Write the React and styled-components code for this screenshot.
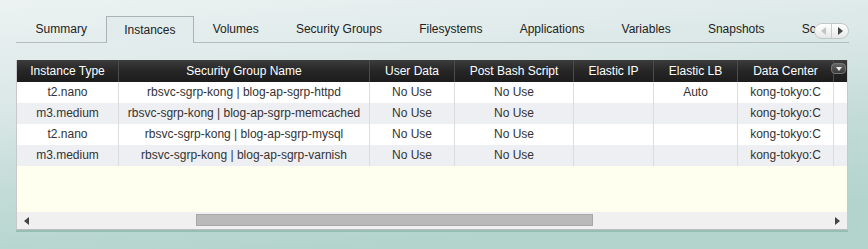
import React from "react";
import styled, { createGlobalStyle } from "styled-components";

const GlobalStyle = createGlobalStyle`
  html, body {
    margin: 0;
    padding: 0;
  }
  body {
    width: 868px;
    height: 249px;
    overflow: hidden;
    font-family: "Liberation Sans", Arial, sans-serif;
    font-size: 12px;
    background: linear-gradient(175deg, #ecf2f2 0%, #d9e7e6 35%, #c2dbd6 60%, #b3d4cd 85%);
  }
`;

const tabs = [
  "Summary",
  "Instances",
  "Volumes",
  "Security Groups",
  "Filesystems",
  "Applications",
  "Variables",
  "Snapshots",
  "Schedules",
];

const columns = [
  { title: "Instance Type", width: 102 },
  { title: "Security Group Name", width: 251 },
  { title: "User Data", width: 85 },
  { title: "Post Bash Script", width: 119 },
  { title: "Elastic IP", width: 80 },
  { title: "Elastic LB", width: 84 },
  { title: "Data Center", width: 96 },
  { title: "", width: 15 },
];

const rows = [
  ["t2.nano", "rbsvc-sgrp-kong | blog-ap-sgrp-httpd", "No Use", "No Use", "", "Auto", "kong-tokyo:C", ""],
  ["m3.medium", "rbsvc-sgrp-kong | blog-ap-sgrp-memcached", "No Use", "No Use", "", "", "kong-tokyo:C", ""],
  ["t2.nano", "rbsvc-sgrp-kong | blog-ap-sgrp-mysql", "No Use", "No Use", "", "", "kong-tokyo:C", ""],
  ["m3.medium", "rbsvc-sgrp-kong | blog-ap-sgrp-varnish", "No Use", "No Use", "", "", "kong-tokyo:C", ""],
];

const gridCols = columns.map((c) => c.width + "px").join(" ");

const App = () => {
  return (
    <>
      <GlobalStyle />
      <Page>
        <TabBar>
          <TabStrip>
            {tabs.map((t) => (
              <Tab key={t} $active={t === "Instances"}>
                {t}
              </Tab>
            ))}
          </TabStrip>
          <TabScroller>
            <ScrollHalf>
              <Arrow $dir="left" $color="#c4c4c4" />
            </ScrollHalf>
            <ScrollHalf $right>
              <Arrow $dir="right" $color="#444" />
            </ScrollHalf>
          </TabScroller>
        </TabBar>

        <Grid>
          <HeaderRow>
            {columns.map((c, i) => (
              <HeadCell key={i} $last={i === columns.length - 1}>
                {c.title}
              </HeadCell>
            ))}
            <MenuButton>
              <Arrow $dir="down" $color="#eee" />
            </MenuButton>
          </HeaderRow>

          <Body>
            {rows.map((r, i) => (
              <Row key={i} $even={i % 2 === 1}>
                {r.map((v, j) => (
                  <Cell key={j}>{v}</Cell>
                ))}
              </Row>
            ))}
          </Body>

          <HScroll>
            <Arrow $dir="left" $color="#444" />
            <Track>
              <Thumb />
            </Track>
            <Arrow $dir="right" $color="#444" />
          </HScroll>
        </Grid>
      </Page>
    </>
  );
};

let Page = styled.div`
  padding: 16px 20px 0 16px;
`;

let TabBar = styled.div`
  position: relative;
  width: 833px;
  height: 26px;
  border-bottom: 1px solid #b5bcbc;
`;

let TabStrip = styled.div`
  display: flex;
  height: 27px;
  width: 800px;
  overflow: hidden;
  padding-left: 1px;
  box-sizing: border-box;
`;

let Tab = styled.div`
  flex: none;
  box-sizing: border-box;
  height: 27px;
  padding: 0 ${(p) => (p.$active ? 17.6 : 18.6)}px;
  line-height: 26px;
  color: #222;
  white-space: nowrap;
  border: ${(p) => (p.$active ? "1px solid #aab3b3" : "none")};
  border-bottom: none;
  background: ${(p) => (p.$active ? "#e3ecec" : "transparent")};
`;

let TabScroller = styled.div`
  position: absolute;
  right: 0;
  top: 7px;
  width: 35px;
  height: 16px;
  box-sizing: border-box;
  display: flex;
  border: 1px solid #c2c6c6;
  border-radius: 8px;
  background: linear-gradient(#ffffff, #e6e8e8);
  overflow: hidden;
`;

let ScrollHalf = styled.div`
  flex: 1;
  display: flex;
  align-items: center;
  justify-content: center;
  border-left: ${(p) => (p.$right ? "1px solid #c8cccc" : "none")};
`;

let Arrow = styled.span`
  display: inline-block;
  width: 0;
  height: 0;
  border-style: solid;
  ${(p) =>
    p.$dir === "left"
      ? `border-width: 4px 5px 4px 0; border-color: transparent ${p.$color} transparent transparent;`
      : p.$dir === "right"
      ? `border-width: 4px 0 4px 5px; border-color: transparent transparent transparent ${p.$color};`
      : `border-width: 4px 3.5px 0 3.5px; border-color: ${p.$color} transparent transparent transparent;`}
`;

let Grid = styled.div`
  margin-top: 17px;
  width: 832px;
  box-sizing: border-box;
  border-left: 1px solid #c8c8c8;
  border-right: 1px solid #c8c8c8;
  border-bottom: 1px solid #bdbdbd;
  box-shadow: 0 2px 0 #97bdb5;
  background: #fffff0;
`;

let HeaderRow = styled.div`
  position: relative;
  display: grid;
  grid-template-columns: ${gridCols};
  height: 22px;
  background: linear-gradient(#3c3c3c, #262626 50%, #1c1c1c);
`;

let HeadCell = styled.div`
  color: #fff;
  text-align: center;
  line-height: 22px;
  white-space: nowrap;
  overflow: hidden;
  border-right: ${(p) => (p.$last ? "none" : "1px solid #4c4c4c")};
`;

let MenuButton = styled.div`
  position: absolute;
  right: 1px;
  top: 3px;
  width: 13px;
  height: 9px;
  border-radius: 4px;
  background: linear-gradient(#666, #3a3a3a);
  border: 1px solid #777;
  display: flex;
  align-items: center;
  justify-content: center;
`;

let Body = styled.div`
  height: 130px;
`;

let Row = styled.div`
  display: grid;
  grid-template-columns: ${gridCols};
  height: 21px;
  background: ${(p) => (p.$even ? "#eeeff2" : "#ffffff")};
`;

let Cell = styled.div`
  color: #333;
  text-align: center;
  line-height: 21px;
  white-space: nowrap;
  overflow: hidden;
  border-right: 1px solid #dcdcdc;
  &:last-child {
    border-right: none;
  }
`;

let HScroll = styled.div`
  display: flex;
  align-items: center;
  height: 17px;
  padding: 0 7px 0 7px;
  background: #f0f0f0;
`;

let Track = styled.div`
  flex: 1;
  position: relative;
  height: 17px;
  margin: 0 6px;
`;

let Thumb = styled.div`
  position: absolute;
  left: 161px;
  top: 2px;
  width: 397px;
  height: 12px;
  box-sizing: border-box;
  background: #bababa;
  border: 1px solid #a8a8a8;
`;

export default App;
